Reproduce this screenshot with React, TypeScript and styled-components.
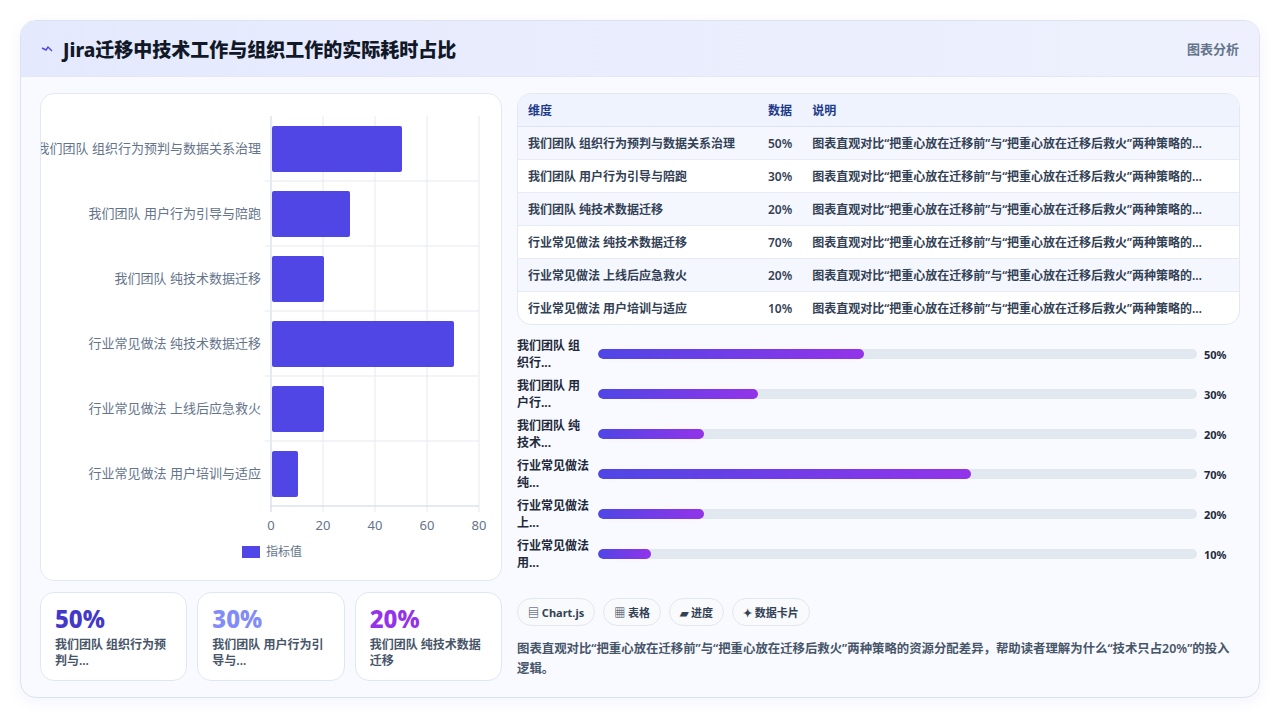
import styled, { createGlobalStyle } from 'styled-components';

const Global = createGlobalStyle`
  html, body { margin: 0; padding: 0; }
  body {
    background: #ffffff;
    font-family: "Noto Sans", "Noto Sans CJK SC", sans-serif;
    color: #1e293b;
  }
`;

const Page = styled.div`
  padding: 20px;
  height: 721px;
  box-sizing: border-box;
`;

const Card = styled.div`
  border: 1px solid #dbe3f3;
  border-radius: 16px;
  background: #f8faff;
  box-shadow: 0 4px 14px rgba(99, 102, 241, 0.08);
  overflow: hidden;
  height: 678px;
  box-sizing: border-box;
`;

const Header = styled.div`
  height: 55px;
  display: flex;
  align-items: center;
  justify-content: space-between;
  padding: 0 20px;
  background: linear-gradient(90deg, #e4e9fd, #eef1fd);
  border-bottom: 1px solid #e3e8f6;
`;

const Title = styled.h1`
  margin: 0;
  font-size: 19px;
  font-weight: 800;
  color: #111827;
  display: flex;
  align-items: center;
  gap: 10px;
`;

const HeaderTag = styled.span`
  font-size: 13px;
  font-weight: 600;
  color: #64748b;
`;

const Body = styled.div`
  display: grid;
  grid-template-columns: 462px 1fr;
  gap: 15px;
  padding: 16px 19px 0 19px;
`;

const Column = styled.div`
  display: flex;
  flex-direction: column;
  gap: 11px;
`;

const Panel = styled.div`
  background: #fff;
  border: 1px solid #e2e8f4;
  border-radius: 14px;
  overflow: hidden;
`;

const StatsRow = styled.div`
  display: grid;
  grid-template-columns: repeat(3, 1fr);
  gap: 10px;
`;

const Stat = styled.div`
  background: #fff;
  border: 1px solid #dfe6f5;
  border-radius: 14px;
  padding: 10px 14px;
  height: 89px;
  box-sizing: border-box;
`;

const StatValue = styled.div<{ $color: string }>`
  font-size: 24px;
  font-weight: 800;
  color: ${(p) => p.$color};
  line-height: 32px;
`;

const StatLabel = styled.div`
  font-size: 12px;
  font-weight: 600;
  color: #475569;
  line-height: 16px;
  margin-top: 2px;
`;

const Table = styled.table`
  width: 100%;
  border-collapse: collapse;
  font-size: 12px;
  th {
    text-align: left;
    font-weight: 600;
    color: #1e3a8a;
    background: #eef3fd;
    height: 32px;
    padding: 0 10px;
    border-bottom: 1px solid #dde4f3;
  }
  td {
    height: 32px;
    padding: 0 10px;
    font-weight: 600;
    color: #334155;
    border-bottom: 1px solid #e6ebf5;
    white-space: nowrap;
  }
  tr:nth-child(odd) td { background: #f5f7fe; }
  tr:last-child td { border-bottom: none; }
`;

const Desc = styled.div`
  width: 394px;
  overflow: hidden;
  text-overflow: ellipsis;
  white-space: nowrap;
`;

const Progress = styled.div`
  display: flex;
  flex-direction: column;
  gap: 6px;
  margin-top: 1px;
`;

const PRow = styled.div`
  display: grid;
  grid-template-columns: 74px 1fr 30px;
  gap: 7px;
  align-items: center;
  height: 34px;
  padding-right: 6px;
`;

const PLabel = styled.div`
  font-size: 12px;
  font-weight: 700;
  line-height: 17px;
  color: #1e293b;
`;

const Track = styled.div`
  height: 10px;
  border-radius: 5px;
  background: #e2e8f0;
  overflow: hidden;
`;

const Fill = styled.div`
  height: 100%;
  border-radius: 5px;
  background: linear-gradient(90deg, #4f46e5, #9333ea);
`;

const PValue = styled.div`
  font-size: 11px;
  font-weight: 700;
  color: #1e293b;
`;

const Chips = styled.div`
  display: flex;
  gap: 8px;
  margin-top: 16px;
`;

const Chip = styled.span`
  font-size: 11px;
  font-weight: 700;
  color: #334155;
  background: #f8fafc;
  border: 1px solid #e2e8f0;
  border-radius: 14px;
  padding: 5px 10px;
`;

const Note = styled.p`
  margin: 2px 0 0;
  font-size: 12.4px;
  font-weight: 600;
  line-height: 20px;
  color: #475569;
  padding-right: 4px;
`;

const rows = [
  ['我们团队 组织行为预判与数据关系治理', 50, '我们团队 组织行...', '我们团队 组织行为预判与数据关系治理'],
  ['我们团队 用户行为引导与陪跑', 30, '我们团队 用户行...', '我们团队 用户行为引导与陪跑'],
  ['我们团队 纯技术数据迁移', 20, '我们团队 纯技术...', '我们团队 纯技术数据迁移'],
  ['行业常见做法 纯技术数据迁移', 70, '行业常见做法 纯...', '行业常见做法 纯技术数据迁移'],
  ['行业常见做法 上线后应急救火', 20, '行业常见做法 上...', '行业常见做法 上线后应急救火'],
  ['行业常见做法 用户培训与适应', 10, '行业常见做法 用...', '行业常见做法 用户培训与适应'],
] as const;

const desc = '图表直观对比“把重心放在迁移前”与“把重心放在迁移后救火”两种策略的资源分配差异，帮助读者理解为什么“技术只占20%”的投入逻辑。';

const Chart = () => {
  const left = 230, right = 438, top = 22, bottom = 412, band = 65;
  const sx = (v: number) => left + (v / 80) * (right - left);
  return (
    <svg width="460" height="486" style={{ display: 'block' }} fontFamily='"Noto Sans", "Noto Sans CJK SC", sans-serif'>
      {[0, 20, 40, 60, 80].map((v) => (
        <g key={v}>
          <line x1={sx(v)} x2={sx(v)} y1={top} y2={bottom + 6} stroke={v === 0 ? '#cbd5e1' : '#e5e9f0'} />
          <text x={sx(v)} y={436} textAnchor="middle" fontSize="13" fill="#64748b">{v}</text>
        </g>
      ))}
      {[1, 2, 3, 4, 5].map((i) => (
        <line key={i} x1={left - 6} x2={right} y1={top + i * band} y2={top + i * band} stroke="#e5e9f0" />
      ))}
      <line x1={left} x2={right} y1={bottom} y2={bottom} stroke="#cbd5e1" />
      {rows.map((r, i) => (
        <g key={i}>
          <rect x={left + 1} y={top + i * band + 10} width={sx(r[1]) - left} height={46} fill="#4f46e5" rx="2" />
          <text x={left - 10} y={top + i * band + 37} textAnchor="end" fontSize="13" fill="#64748b">{r[0]}</text>
        </g>
      ))}
      <rect x={201} y={452} width={18} height={12} fill="#4f46e5" />
      <text x={225} y={462} fontSize="12" fill="#64748b">指标值</text>
    </svg>
  );
};

export default function App() {
  return (
    <>
      <Global />
      <Page>
        <Card>
          <Header>
            <Title>
              <svg width="12" height="8" viewBox="0 0 12 8">
                <path d="M1 3 L5 5 L7 2 L11 6" stroke="#4f46e5" strokeWidth="1.4" fill="none" />
              </svg>
              Jira迁移中技术工作与组织工作的实际耗时占比
            </Title>
            <HeaderTag>图表分析</HeaderTag>
          </Header>
          <Body>
            <Column>
              <Panel><Chart /></Panel>
              <StatsRow>
                <Stat><StatValue $color="#4338ca">50%</StatValue><StatLabel>我们团队 组织行为预判与...</StatLabel></Stat>
                <Stat><StatValue $color="#818cf8">30%</StatValue><StatLabel>我们团队 用户行为引导与...</StatLabel></Stat>
                <Stat><StatValue $color="#9333ea">20%</StatValue><StatLabel>我们团队 纯技术数据迁移</StatLabel></Stat>
              </StatsRow>
            </Column>
            <Column>
              <Panel>
                <Table>
                  <thead>
                    <tr><th style={{ width: 220 }}>维度</th><th style={{ width: 24 }}>数据</th><th>说明</th></tr>
                  </thead>
                  <tbody>
                    {rows.map((r) => (
                      <tr key={r[0]}>
                        <td>{r[3]}</td>
                        <td>{r[1]}%</td>
                        <td><Desc>{desc}</Desc></td>
                      </tr>
                    ))}
                  </tbody>
                </Table>
              </Panel>
              <Progress>
                {rows.map((r) => (
                  <PRow key={r[0]}>
                    <PLabel>{r[2]}</PLabel>
                    <Track><Fill style={{ width: `${(r[1] / 112.5) * 100}%` }} /></Track>
                    <PValue>{r[1]}%</PValue>
                  </PRow>
                ))}
              </Progress>
              <Chips>
                <Chip>▤ Chart.js</Chip>
                <Chip>▦ 表格</Chip>
                <Chip>▰ 进度</Chip>
                <Chip>✦ 数据卡片</Chip>
              </Chips>
              <Note>{desc}</Note>
            </Column>
          </Body>
        </Card>
      </Page>
    </>
  );
}
